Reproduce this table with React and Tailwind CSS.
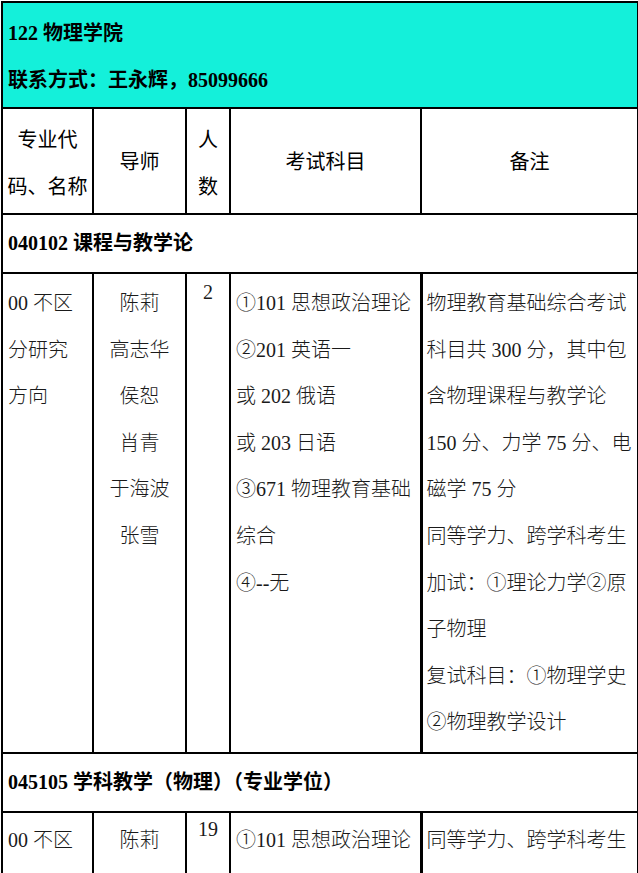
import React from 'react';

const serif = { fontFamily: '"Liberation Serif", "Noto Sans CJK SC", serif' };

const teachers = ['陈莉', '高志华', '侯恕', '肖青', '于海波', '张雪'];
const subjects = ['①101 思想政治理论', '②201 英语一', '或 202 俄语', '或 203 日语', '③671 物理教育基础', '综合', '④--无'];
const notes = [
    '物理教育基础综合考试',
    '科目共 300 分，其中包',
    '含物理课程与教学论',
    '150 分、力学 75 分、电',
    '磁学 75 分',
    '同等学力、跨学科考生',
    '加试：①理论力学②原',
    '子物理',
    '复试科目：①物理学史',
    '②物理教学设计',
];

function Lines({ items, className = '' }) {
    return (
        <div className={className}>
            {items.map((t, i) => (
                <div key={i} className="whitespace-nowrap">{t}</div>
            ))}
        </div>
    );
}

export default function App() {
    const cell = 'border-2 border-black';
    return (
        <div className="w-[638px] min-h-[873px] bg-white pl-px pt-px overflow-hidden">
            <table
                className="w-[636px] table-fixed border-collapse text-[20px] leading-[46.6px] text-[#1a1a1a] font-light"
                style={serif}
            >
                <colgroup>
                    <col className="w-[91px]" />
                    <col className="w-[93px]" />
                    <col className="w-[44px]" />
                    <col className="w-[191px]" />
                    <col className="w-[217px]" />
                </colgroup>
                <tbody>
                    <tr>
                        <td colSpan={5} className={`${cell} align-top h-[106px] bg-[#14f0da] px-[5px] pt-[7px] font-bold text-black`}>
                            <div>122 物理学院</div>
                            <div>联系方式：王永辉，85099666</div>
                        </td>
                    </tr>
                    <tr className="font-normal text-black" style={{ fontFamily: '"Noto Sans CJK SC", sans-serif' }}>
                        <td className={`${cell} align-top h-[106px] pt-[7px] text-center`}>
                            <div>专业代</div>
                            <div>码、名称</div>
                        </td>
                        <td className={`${cell} align-middle text-center`}>导师</td>
                        <td className={`${cell} align-top pt-[7px] text-center`}>
                            <div>人</div>
                            <div>数</div>
                        </td>
                        <td className={`${cell} align-middle text-center`}>考试科目</td>
                        <td className={`${cell} align-middle text-center`}>备注</td>
                    </tr>
                    <tr>
                        <td colSpan={5} className={`${cell} h-[59px] align-middle px-[5px] font-bold text-black`}>
                            040102 课程与教学论
                        </td>
                    </tr>
                    <tr>
                        <td className={`${cell} align-top h-[480px] px-[5px] pt-[6px]`}>
                            <Lines items={['00 不区', '分研究', '方向']} />
                        </td>
                        <td className={`${cell} align-top pt-[6px] text-center`}>
                            <Lines items={teachers} />
                        </td>
                        <td className={`${cell} align-top pt-[6px] text-center`}>
                            <div className="leading-[24px]">2</div>
                        </td>
                        <td className={`${cell} align-top pl-[5px] pt-[6px]`}>
                            <Lines items={subjects} />
                        </td>
                        <td className={`${cell} align-top border-l-[3px] pl-[4px] pt-[6px]`}>
                            <Lines items={notes} />
                        </td>
                    </tr>
                    <tr>
                        <td colSpan={5} className={`${cell} h-[59px] align-middle px-[5px] font-bold text-black`}>
                            045105 学科教学（物理）（专业学位）
                        </td>
                    </tr>
                    <tr>
                        <td className={`${cell} align-top h-[90px] px-[5px] pt-[4px]`}>
                            <div>00 不区</div>
                        </td>
                        <td className={`${cell} align-top pt-[4px] text-center`}>
                            <div>陈莉</div>
                        </td>
                        <td className={`${cell} align-top pt-[4px] text-center`}>
                            <div className="leading-[24px]">19</div>
                        </td>
                        <td className={`${cell} align-top pl-[5px] pt-[4px]`}>
                            <div className="whitespace-nowrap">①101 思想政治理论</div>
                        </td>
                        <td className={`${cell} align-top border-l-[3px] pl-[4px] pt-[4px]`}>
                            <div className="whitespace-nowrap">同等学力、跨学科考生</div>
                        </td>
                    </tr>
                </tbody>
            </table>
        </div>
    );
}
